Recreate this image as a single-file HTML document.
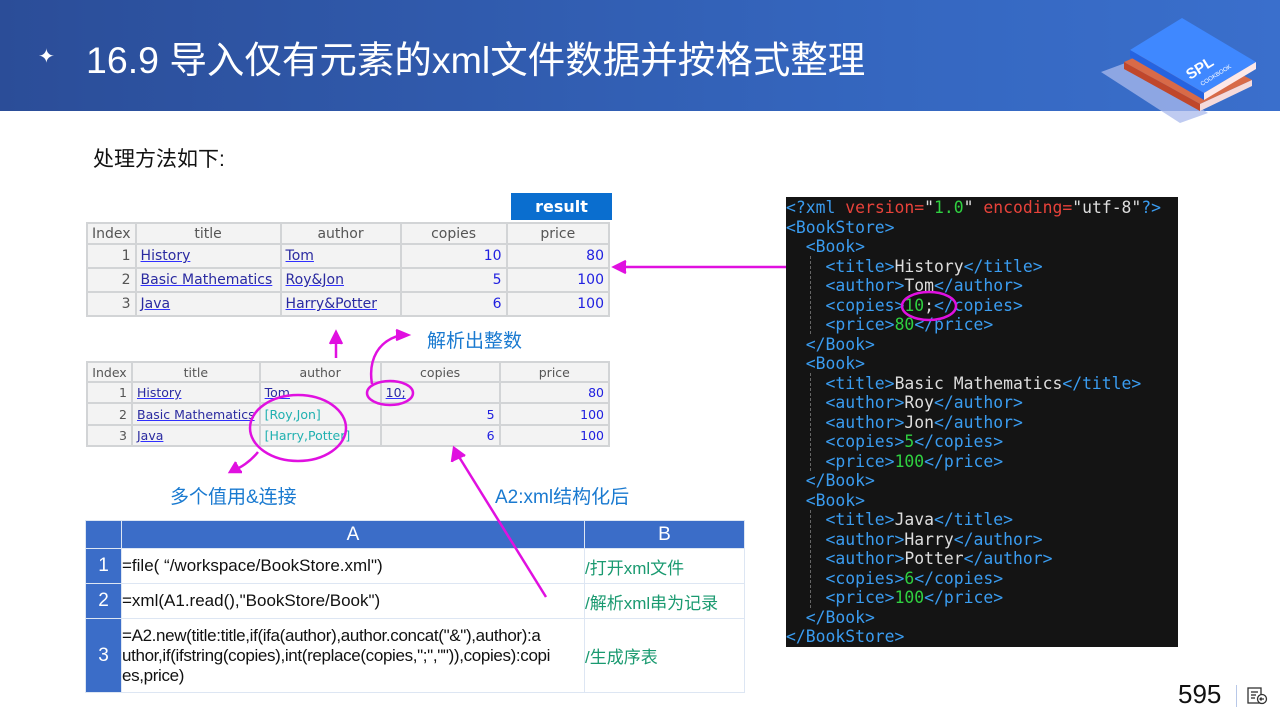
<!DOCTYPE html>
<html><head><meta charset="utf-8"><style>
*{margin:0;padding:0;box-sizing:border-box}
body{width:1280px;height:720px;position:relative;background:#fff;font-family:"Liberation Sans","Noto Sans CJK SC",sans-serif;overflow:hidden}
.hdr{position:absolute;left:0;top:0;width:1280px;height:111px;background:linear-gradient(90deg,#2b4d98,#3567c0 70%,#3a6fcc)}
.hdr h1{position:absolute;left:86px;top:29px;color:#fff;font-weight:normal;font-size:37.5px;letter-spacing:0}
.star{position:absolute;left:38px;top:44px;color:#fff;font-size:20px}
.abs{position:absolute}
table{border-collapse:collapse;position:absolute}
.dt{background:#f3f3f3;font-family:"DejaVu Sans","Noto Sans CJK SC",sans-serif;color:#555}
.dt td{border:2px solid #d2d4d6;padding:0 4px;white-space:nowrap}
.dt .h{text-align:center;color:#555}
.dt .n{text-align:right}
.dt .u{color:#2a2aa0;text-decoration:underline;text-decoration-color:#3030ff}
.dt .b{color:#2020e0;text-align:right}
.dt .c{color:#20b0b0}
.xml{position:absolute;left:786px;top:197px;width:392px;height:450px;background:#141414;font-family:"DejaVu Sans Mono","Liberation Mono",monospace;font-size:16.4px;line-height:19.5px;padding-top:1px;color:#ddd;white-space:pre;overflow:hidden}
.t{color:#3a9cf0}.r{color:#e8423a}.g{color:#2fd040}.w{color:#ddd}
.ct td{border:1px solid #dde6f3;font-size:17px;color:#111;white-space:nowrap}
.ct .hd{background:#3b6dc8;color:#fff;text-align:center;font-size:19px}
.ct .cm{color:#1a9a70}
.vl{position:absolute;width:0;border-left:1px dashed #666}
</style></head><body>
<div class="hdr"><span class="star">✦</span><h1>16.9 导入仅有元素的xml文件数据并按格式整理</h1>
<svg class="abs" style="left:1090px;top:0" width="190" height="125" viewBox="1090 0 190 125">
<polygon points="1101,72 1128,62 1208,113 1180,123" fill="#a9b9ec" opacity="0.75"/>
<polygon points="1124,62 1176,40 1252,80 1200,104" fill="#d86a48"/>
<polygon points="1124,62 1124,69 1200,111 1200,104" fill="#c0472b"/>
<polygon points="1200,104 1252,80 1252,86 1200,111" fill="#f6dada"/>
<polygon points="1130,50 1182,18 1256,62 1204,93" fill="#3f88ff"/>
<polygon points="1130,50 1130,57 1204,100 1204,93" fill="#2563e0"/>
<polygon points="1204,93 1256,62 1256,69 1204,100" fill="#fde8e8"/>
<text x="1190" y="80" fill="#fff" font-family="Liberation Sans" font-weight="bold" font-size="15" transform="rotate(-32 1190 80)">SPL</text>
<text x="1202" y="86" fill="#fff" font-family="Liberation Sans" font-size="6" transform="rotate(-32 1202 86)">COOKBOOK</text>
</svg>
</div>
<div class="abs" style="left:93px;top:143px;font-size:21px;color:#111">处理方法如下:</div>

<div class="abs" style="left:511px;top:193px;width:101px;height:27px;background:#0a6ecf;color:#fff;font-weight:bold;font-size:16px;text-align:center;line-height:27px;font-family:'DejaVu Sans',sans-serif">result</div>
<table class="dt" style="left:86px;top:222px;width:524px;font-size:14px">
<tr style="height:21px"><td class="h" style="width:47px">Index</td><td class="h" style="width:145px">title</td><td class="h" style="width:120px">author</td><td class="h" style="width:106px">copies</td><td class="h">price</td></tr>
<tr style="height:24px"><td class="n">1</td><td class="u">History</td><td class="u">Tom</td><td class="b">10</td><td class="b">80</td></tr>
<tr style="height:24px"><td class="n">2</td><td class="u">Basic Mathematics</td><td class="u">Roy&amp;Jon</td><td class="b">5</td><td class="b">100</td></tr>
<tr style="height:24px"><td class="n">3</td><td class="u">Java</td><td class="u">Harry&amp;Potter</td><td class="b">6</td><td class="b">100</td></tr>
</table>

<table class="dt" style="left:86px;top:361px;width:524px;font-size:12.5px">
<tr style="height:20px"><td class="h" style="width:45px">Index</td><td class="h" style="width:119px">title</td><td class="h" style="width:121px">author</td><td class="h" style="width:119px">copies</td><td class="h">price</td></tr>
<tr style="height:21px"><td class="n">1</td><td class="u">History</td><td class="u">Tom</td><td class="u">10;</td><td class="b">80</td></tr>
<tr style="height:22px"><td class="n">2</td><td class="u">Basic Mathematics</td><td class="c">[Roy,Jon]</td><td class="b">5</td><td class="b">100</td></tr>
<tr style="height:21px"><td class="n">3</td><td class="u">Java</td><td class="c">[Harry,Potter]</td><td class="b">6</td><td class="b">100</td></tr>
</table>

<div class="abs" style="left:427px;top:326px;font-size:19px;color:#1a7ad0">解析出整数</div>
<div class="abs" style="left:170px;top:482px;font-size:19px;color:#1a7ad0">多个值用&amp;连接</div>
<div class="abs" style="left:495px;top:482px;font-size:19px;color:#1a7ad0">A2:xml结构化后</div>

<table class="ct" style="left:85px;top:520px;width:660px">
<tr style="height:28px"><td class="hd" style="width:36px"></td><td class="hd" style="width:463px">A</td><td class="hd">B</td></tr>
<tr style="height:35px"><td class="hd">1</td><td>=file(&nbsp;“/workspace/BookStore.xml")</td><td class="cm">/打开xml文件</td></tr>
<tr style="height:35px"><td class="hd">2</td><td>=xml(A1.read(),"BookStore/Book")</td><td class="cm">/解析xml串为记录</td></tr>
<tr style="height:74px"><td class="hd">3</td><td style="line-height:20px;letter-spacing:-0.35px">=A2.new(title:title,if(ifa(author),author.concat("&amp;"),author):a<br>uthor,if(ifstring(copies),int(replace(copies,";","")),copies):copi<br>es,price)</td><td class="cm">/生成序表</td></tr>
</table>

<div class="xml"><span class="t">&lt;?xml </span><span class="r">version=</span><span class="w">"</span><span class="g">1.0</span><span class="w">"</span> <span class="r">encoding=</span><span class="w">"utf-8"</span><span class="t">?&gt;</span>
<span class="t">&lt;BookStore&gt;</span>
<span class="t">  &lt;Book&gt;</span>
<span class="t">    &lt;title&gt;</span>History<span class="t">&lt;/title&gt;</span>
<span class="t">    &lt;author&gt;</span>Tom<span class="t">&lt;/author&gt;</span>
<span class="t">    &lt;copies&gt;</span><span class="g">10</span>;<span class="t">&lt;/copies&gt;</span>
<span class="t">    &lt;price&gt;</span><span class="g">80</span><span class="t">&lt;/price&gt;</span>
<span class="t">  &lt;/Book&gt;</span>
<span class="t">  &lt;Book&gt;</span>
<span class="t">    &lt;title&gt;</span>Basic Mathematics<span class="t">&lt;/title&gt;</span>
<span class="t">    &lt;author&gt;</span>Roy<span class="t">&lt;/author&gt;</span>
<span class="t">    &lt;author&gt;</span>Jon<span class="t">&lt;/author&gt;</span>
<span class="t">    &lt;copies&gt;</span><span class="g">5</span><span class="t">&lt;/copies&gt;</span>
<span class="t">    &lt;price&gt;</span><span class="g">100</span><span class="t">&lt;/price&gt;</span>
<span class="t">  &lt;/Book&gt;</span>
<span class="t">  &lt;Book&gt;</span>
<span class="t">    &lt;title&gt;</span>Java<span class="t">&lt;/title&gt;</span>
<span class="t">    &lt;author&gt;</span>Harry<span class="t">&lt;/author&gt;</span>
<span class="t">    &lt;author&gt;</span>Potter<span class="t">&lt;/author&gt;</span>
<span class="t">    &lt;copies&gt;</span><span class="g">6</span><span class="t">&lt;/copies&gt;</span>
<span class="t">    &lt;price&gt;</span><span class="g">100</span><span class="t">&lt;/price&gt;</span>
<span class="t">  &lt;/Book&gt;</span>
<span class="t">&lt;/BookStore&gt;</span></div>
<div class="vl" style="left:810px;top:256px;height:78px"></div>
<div class="vl" style="left:810px;top:373px;height:98px"></div>
<div class="vl" style="left:810px;top:510px;height:98px"></div>

<svg class="abs" style="left:0;top:0" width="1280" height="720">
<g stroke="#e010e0" stroke-width="2.5" fill="none">
<line x1="786" y1="267" x2="620" y2="267"/>
<polyline points="626,261 614,267 626,273" fill="#e010e0"/>
<line x1="336" y1="358" x2="336" y2="336"/>
<polyline points="330,344 336,332 342,344" fill="#e010e0"/>
<path d="M372,384 C368,360 378,340 402,335"/>
<polyline points="396,330 408,335 396,340" fill="#e010e0"/>
<ellipse cx="390" cy="393" rx="23" ry="12"/>
<ellipse cx="298" cy="428" rx="48" ry="33"/>
<path d="M258,452 C250,462 240,468 234,470"/>
<polyline points="236,462 230,472 242,472" fill="#e010e0"/>
<line x1="546" y1="597" x2="456" y2="452"/>
<polyline points="452,462 454,448 465,456" fill="#e010e0"/>
<ellipse cx="929" cy="306" rx="27" ry="14"/>
</g>
</svg>

<div class="abs" style="left:1178px;top:679px;font-size:26px;color:#111">595</div>
<div class="abs" style="left:1236px;top:685px;width:1px;height:22px;background:#b8c8e8"></div>
<svg class="abs" style="left:1247px;top:686px" width="22" height="20" viewBox="0 0 22 20"><g stroke="#333" stroke-width="1.3" fill="none"><rect x="1" y="2" width="13" height="15"/><line x1="4" y1="6" x2="11" y2="6"/><line x1="4" y1="9" x2="9" y2="9"/><line x1="4" y1="12" x2="8" y2="12"/><circle cx="15" cy="13" r="4.5" fill="#fff"/><path d="M17,13 H13 M14.5,11.5 L13,13 L14.5,14.5"/></g></svg>
</body></html>
